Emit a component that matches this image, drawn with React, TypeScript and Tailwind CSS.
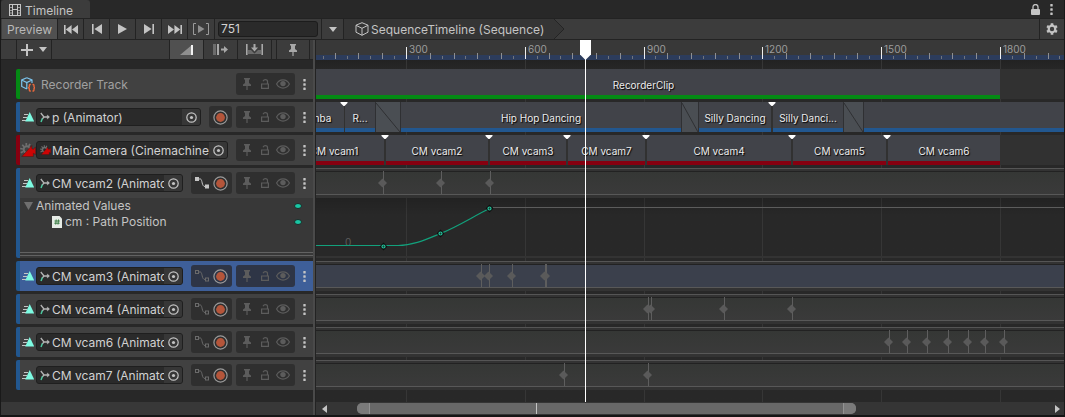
import React from "react";

type IconProps = { className?: string };

/* ---------- icons ---------- */

const FilmIcon = () => (
  <svg width="12" height="12" viewBox="0 0 12 12" fill="none" stroke="#c4c4c4" aria-hidden="true">
    <path d="M.5 0v12M11.5 0v12M3.5 0v12M8.5 0v12M0 .5h12M0 11.5h12M3 5.5h6" />
    <path d="M1 3.5h2M1 6.5h2M1 9h2M9 3.5h2M9 6.5h2M9 9h2" opacity=".7" />
  </svg>
);

const LockIcon = () => (
  <svg width="9" height="11" viewBox="0 0 9 11" aria-hidden="true">
    <path d="M2 5V3a2.5 2.5 0 0 1 5 0v2" fill="none" stroke="#c4c4c4" strokeWidth="1.3" />
    <rect x="0" y="5" width="9" height="6" rx="1" fill="#c4c4c4" />
  </svg>
);

const KebabIcon = () => (
  <svg width="3" height="11" viewBox="0 0 3 11" fill="#c4c4c4" aria-hidden="true">
    <rect x=".3" y="0" width="2.4" height="2.4" rx=".5" />
    <rect x=".3" y="4.3" width="2.4" height="2.4" rx=".5" />
    <rect x=".3" y="8.6" width="2.4" height="2.4" rx=".5" />
  </svg>
);

const SkipStartIcon = () => (
  <svg width="14" height="9" viewBox="0 0 14 9" fill="#c4c4c4" aria-hidden="true">
    <path d="M0 0h1.6v9H0zM7.6 0v9L1.8 4.5zM14 0v9L8 4.5z" />
  </svg>
);
const StepBackIcon = () => (
  <svg width="10" height="10" viewBox="0 0 10 10" fill="#c4c4c4" aria-hidden="true">
    <path d="M0 0h1.6v10H0zM10 0v10L2.4 5z" />
  </svg>
);
const PlayIcon = () => (
  <svg width="9" height="10" viewBox="0 0 9 10" fill="#c4c4c4" aria-hidden="true">
    <path d="M0 0v10l9-5z" />
  </svg>
);
const StepForwardIcon = () => (
  <svg width="10" height="10" viewBox="0 0 10 10" fill="#c4c4c4" aria-hidden="true">
    <path d="M8.4 0H10v10H8.4zM0 0v10l7.6-5z" />
  </svg>
);
const SkipEndIcon = () => (
  <svg width="14" height="9" viewBox="0 0 14 9" fill="#c4c4c4" aria-hidden="true">
    <path d="M12.4 0H14v9h-1.6zM6.4 0v9l5.8-4.5zM0 0v9l6-4.5z" />
  </svg>
);
const PlayRangeIcon = () => (
  <svg width="16" height="12" viewBox="0 0 16 12" aria-hidden="true">
    <path d="M3 .5H.5v11H3M13 .5h2.500v11H13" fill="none" stroke="#9b9b9b" />
    <path d="M5 2v8l6.500-4z" fill="#8f8f8f" />
  </svg>
);

const ChevronDown = () => (
  <svg width="8" height="5" viewBox="0 0 8 5" fill="#c4c4c4" aria-hidden="true">
    <path d="M0 0h8L4 5z" />
  </svg>
);

const CubeIcon = () => (
  <svg width="14" height="14" viewBox="0 0 14 14" fill="none" stroke="#c4c4c4" strokeLinejoin="round" aria-hidden="true">
    <path d="M7 .7l6 2.500v7L7 13.300 1 10.200v-7zM1 3.300l6 3 6-3M7 6.300v7" />
  </svg>
);

const GearIcon = () => (
  <svg width="12" height="12" viewBox="0 0 12 12" fill="none" stroke="#c4c4c4" aria-hidden="true">
    <circle cx="6" cy="6" r="3.300" strokeWidth="2.200" />
    <path d="M6 .3v2M6 9.700v2M1.060 3.150l1.700 1M9.240 7.850l1.700 1M1.060 8.850l1.700-1M9.240 4.150l1.700-1" strokeWidth="2.600" />
  </svg>
);

const PlusIcon = () => (
  <svg width="12" height="12" viewBox="0 0 12 12" fill="#c4c4c4" aria-hidden="true">
    <path d="M5 0h2v5h5v2H7v5H5V7H0V5h5z" />
  </svg>
);

const MixIcon = () => (
  <svg width="13" height="10" viewBox="0 0 13 10" aria-hidden="true">
    <path d="M0 10L11 .8V10z" fill="#8f8f8f" />
    <path d="M11 0h2v10h-2z" fill="#f2f2f2" />
  </svg>
);
const RippleIcon = () => (
  <svg width="15" height="11" viewBox="0 0 15 11" aria-hidden="true">
    <path d="M0 0h3v11H0z" fill="#6b6b6b" />
    <path d="M4 0h2v11H4z" fill="#a8a8a8" />
    <path d="M8 4.500h3V2l4 3.500L11 9V6.500H8z" fill="#a8a8a8" />
  </svg>
);
const ReplaceIcon = () => (
  <svg width="17" height="11" viewBox="0 0 17 11" aria-hidden="true">
    <path d="M2 6h3l3.500 3.500L12 6h3v4H2z" fill="#6b6b6b" />
    <path d="M0 0h1.600v11H0zM15.400 0H17v11h-1.600zM7.500 0h2v3.500H12L8.500 7.500 5 3.500h2.500z" fill="#a8a8a8" />
  </svg>
);

const PinIcon = ({ className }: IconProps) => (
  <svg width="8" height="12" viewBox="0 0 8 12" fill="currentColor" className={className} aria-hidden="true">
    <path d="M1 0h6v1.500H6V5l2 1.500V8H4.600v4H3.400V8H0V6.500L2 5V1.500H1z" />
  </svg>
);
const UnlockIcon = () => (
  <svg width="8" height="10" viewBox="0 0 8 10" fill="none" stroke="currentColor" aria-hidden="true">
    <path d="M.6 5h6.800v4.400H.6zM6.500 5V2.600C6.500 1.200 5.500.6 4.300.6S2.500 1.300 2 2.200" strokeWidth="1.200" />
  </svg>
);
const EyeIcon = () => (
  <svg width="14" height="10" viewBox="0 0 14 10" fill="none" stroke="currentColor" aria-hidden="true">
    <path d="M.6 5C3.600-.4 10.400-.4 13.400 5 10.400 10.400 3.600 10.400.6 5z" strokeWidth="1.200" />
    <circle cx="7" cy="4.600" r="2.700" fill="currentColor" stroke="none" />
  </svg>
);

const RecordIcon = () => (
  <svg width="15" height="15" viewBox="0 0 15 15" aria-hidden="true">
    <circle cx="7.500" cy="7.500" r="6.600" fill="none" stroke="#9a9a9a" strokeWidth="1.200" />
    <circle cx="7.500" cy="7.500" r="4.400" fill="#b4553a" />
  </svg>
);

const CurvesIcon = ({ active }: { active: boolean }) => (
  <svg width="14" height="12" viewBox="0 0 14 12" fill="none" stroke={active ? "#c4c4c4" : "#6a6a6a"} aria-hidden="true">
    <path d="M4 2h1.500C7.500 2.500 6.500 9.500 10 9.500" />
    <rect x=".5" y=".5" width="3" height="3" fill={active ? "#c4c4c4" : "none"} />
    <rect x="10.500" y="8" width="3" height="3" fill={active ? "#c4c4c4" : "none"} />
  </svg>
);

const PickerIcon = () => (
  <svg width="11" height="11" viewBox="0 0 11 11" aria-hidden="true">
    <circle cx="5.500" cy="5.500" r="4.700" fill="none" stroke="#c4c4c4" strokeWidth="1.200" />
    <circle cx="5.500" cy="5.500" r="1.600" fill="#c4c4c4" />
  </svg>
);

const AnimationTrackIcon = () => (
  <svg width="12" height="10" viewBox="0 0 12 10" aria-hidden="true">
    <path d="M2 2.500h4M1 5.500h4M0 8.500h4" stroke="#c4c4c4" />
    <path d="M7.700 0L12.200 9.500H3.200z" fill="#7dfbe2" />
  </svg>
);

const AnimatorIcon = () => (
  <svg width="10" height="11" viewBox="0 0 10 11" fill="none" aria-hidden="true">
    <path d="M.8 1L4 5H9" stroke="#b5b5b5" strokeWidth="1.300" />
    <path d="M7.300 3L9.500 5 7.300 7z" fill="#b5b5b5" stroke="#b5b5b5" strokeWidth=".5" />
    <path d="M4 5L2.200 7" stroke="#b5b5b5" strokeWidth="1.300" />
    <path d="M2.400 6.500L1 10" stroke="#4cc9a0" strokeWidth="1.500" />
  </svg>
);

const CinemachineIcon = ({ className }: IconProps) => (
  <svg viewBox="0 0 16 14" className={className} aria-hidden="true">
    <circle cx="6.800" cy="6.500" r="3.200" fill="none" stroke="#6e6e6e" strokeWidth="2" />
    <path d="M6.300 0v2.500M10 .8L8.800 3M2.300 1.800L4 3.800M.2 5.500l2.600.5M.8 9.800l2.200-1.200" stroke="#6e6e6e" strokeWidth="1.700" />
    <path d="M1.800 13.600L10.300 4.200l1.500-1.700v3l1.400.8L15.600 4v7.600l-2.200-1.300v3.300z" fill="#cc0505" stroke="#3a1010" strokeWidth=".4" />
  </svg>
);

const RecorderIcon = () => (
  <svg width="14" height="15" viewBox="0 0 14 15" fill="none" aria-hidden="true">
    <path d="M5.800.7L11 3v3M5.800.7L.7 3v6.500L5.800 12M.7 3l5.100 2.500L11 3M5.800 5.500V12" stroke="#7cc4ee" strokeWidth="1.200" />
    <path d="M9.800 7.500H9c-.6 0-.7.400-.7 1V10l-.8.800.8.800v1.400c0 .600.100 1 .700 1h.8M11.500 7.500h.8c.6 0 .7.400.7 1V10l.8.800-.8.800v1.400c0 .6-.1 1-.7 1h-.8" stroke="#ef6a3c" strokeWidth="1.300" />
  </svg>
);

const ScriptIcon = () => (
  <svg width="10" height="12" viewBox="0 0 10 12" aria-hidden="true">
    <path d="M0 0h7.500L10 2.500V12H0z" fill="#e6ebe6" />
    <path d="M4.200 3.500l-.5 5M6.500 3.500L6 8.500M2.500 5h5.300M2.300 7.200h5.300" stroke="#3b7d44" />
  </svg>
);

/* ---------- data ---------- */

type Clip = { x: number; w: number; label?: string; kind?: "blend"; cut?: boolean };
type Track = {
  id: string;
  name: string;
  kind: "recorder" | "animation" | "cinemachine";
  clips?: Clip[];
  keys?: number[];
  record?: boolean;
  curves?: "open" | "closed";
  selected?: boolean;
};

const TRACKS: Track[] = [
  {
    id: "recorder",
    name: "Recorder Track",
    kind: "recorder",
    clips: [{ x: -29, w: 713, label: "RecorderClip" }],
  },
  {
    id: "p",
    name: "p (Animator)",
    kind: "animation",
    record: true,
    clips: [
      { x: -30, w: 58, label: "Samba" },
      { x: 29, w: 30, label: "R...", cut: true },
      { x: 59, w: 26, kind: "blend" },
      { x: 85, w: 280, label: "Hip Hop Dancing" },
      { x: 365, w: 18, kind: "blend" },
      { x: 383, w: 72, label: "Silly Dancing" },
      { x: 457, w: 70, label: "Silly Danci...", cut: true },
      { x: 527, w: 21, kind: "blend" },
      { x: 548, w: 2000 },
    ],
  },
  {
    id: "camera",
    name: "Main Camera (CinemachineBrain)",
    kind: "cinemachine",
    clips: [
      { x: -32, w: 100, label: "CM vcam1" },
      { x: 70, w: 102, label: "CM vcam2", cut: true },
      { x: 174, w: 76, label: "CM vcam3", cut: true },
      { x: 252, w: 77, label: "CM vcam7", cut: true },
      { x: 331, w: 144, label: "CM vcam4", cut: true },
      { x: 477, w: 93, label: "CM vcam5", cut: true },
      { x: 572, w: 112, label: "CM vcam6", cut: true },
    ],
  },
  { id: "v2", name: "CM vcam2 (Animator)", kind: "animation", record: true, curves: "open", keys: [67, 125, 174] },
  { id: "v3", name: "CM vcam3 (Animator)", kind: "animation", record: true, curves: "closed", selected: true, keys: [165, 173, 196, 229, 230] },
  { id: "v4", name: "CM vcam4 (Animator)", kind: "animation", record: true, curves: "closed", keys: [332, 335, 408, 476] },
  { id: "v6", name: "CM vcam6 (Animator)", kind: "animation", record: true, curves: "closed", keys: [573, 591, 611, 632, 652, 669, 688] },
  { id: "v7", name: "CM vcam7 (Animator)", kind: "animation", record: true, curves: "closed", keys: [248, 332] },
];

const STRIP = { recorder: "bg-[#048a14]", animation: "bg-[#22578f]", cinemachine: "bg-[#860010]" };

const PX_PER_FRAME = 0.396;
const frameToX = (frame: number) => Math.round(90 + (frame - 300) * PX_PER_FRAME);
const MAJOR_FRAMES = [300, 600, 900, 1200, 1500, 1800, 2100, 2400, 2700, 3000];
const TICK_FRAMES = Array.from({ length: 100 }, (_, i) => 90 + i * 30);
const PLAYHEAD_FRAME = 751;

/* ---------- header side ---------- */

function ToolButton({ label, children, className = "" }: { label: string; children: React.ReactNode; className?: string }) {
  return (
    <button aria-label={label} className={`flex shrink-0 items-center justify-center border-r border-[#232323] ${className}`}>
      {children}
    </button>
  );
}

function ObjectField({ track }: { track: Track }) {
  return (
    <div className="mr-2 flex h-[18px] min-w-0 flex-1 overflow-hidden rounded-[3px] border border-[#1f1f1f] bg-[#2a2a2a]">
      <div className="flex min-w-0 flex-1 items-center gap-0.5 overflow-hidden pl-[3px]">
        <span className="flex w-[10px] shrink-0 justify-center">
          {track.kind === "cinemachine" ? <CinemachineIcon className="h-[10px] w-[11px] shrink-0" /> : <AnimatorIcon />}
        </span>
        <span className="whitespace-nowrap pt-0.5 text-[#d2d2d2]">{track.name}</span>
      </div>
      <button aria-label={`Select object for ${track.name}`} className="flex w-[18px] shrink-0 items-center justify-center bg-[#373737]">
        <PickerIcon />
      </button>
    </div>
  );
}

function TrackHeader({ track }: { track: Track }) {
  const group = track.selected ? "bg-[#2e3546]" : "bg-[#2f2f2f]";
  return (
    <section className="flex">
      <div className={`w-1 shrink-0 rounded-l-[2px] ${STRIP[track.kind]}`} />
      <div className="min-w-0 flex-1">
        <div className={`flex h-[30px] items-center ${track.selected ? "bg-[#3e5f99]" : "bg-[#414141]"}`}>
          <span className="flex w-4 shrink-0 items-center justify-center">
            {track.kind === "recorder" && <RecorderIcon />}
            {track.kind === "animation" && <AnimationTrackIcon />}
            {track.kind === "cinemachine" && <CinemachineIcon className="h-[14px] w-4" />}
          </span>
          {track.kind === "recorder" ? (
            <span className="flex-1 pl-[5px] pt-0.5 text-[#a0a0a0]">{track.name}</span>
          ) : (
            <ObjectField track={track} />
          )}
          {track.record && (
            <div className={`mr-1 flex h-[22px] items-center gap-1 rounded-[3px] pl-1 pr-1 ${group}`}>
              {track.curves && (
                <button aria-label="Toggle curves">
                  <CurvesIcon active={track.curves === "open"} />
                </button>
              )}
              <button aria-label="Record">
                <RecordIcon />
              </button>
            </div>
          )}
          <div className={`flex h-[22px] w-[59px] items-center justify-between rounded-[3px] pl-[7px] pr-[5px] text-[#5c5c5c] ${group}`}>
            <button aria-label="Show markers"><PinIcon /></button>
            <button aria-label="Lock track" className="pl-0.5"><UnlockIcon /></button>
            <button aria-label="Mute track"><EyeIcon /></button>
          </div>
          <button aria-label="Track options" className="flex w-[18px] items-center justify-center">
            <KebabIcon />
          </button>
        </div>
        {track.curves === "open" && <AnimatedValues />}
      </div>
    </section>
  );
}

function AnimatedValues() {
  const dot = (
    <svg width="8" height="6" viewBox="0 0 8 6" aria-hidden="true">
      <ellipse cx="4" cy="3" rx="3.500" ry="2.500" fill="#19c6a4" stroke="#1d2b28" />
    </svg>
  );
  return (
    <div className="flex h-[60px] flex-col bg-[#383838] text-[#c4c4c4]">
      <div className="flex h-4 items-center pl-1 pr-[11px]">
        <svg width="9" height="8" viewBox="0 0 9 8" fill="#6f6f6f" aria-hidden="true">
          <path d="M0 0h9L4.500 8z" />
        </svg>
        <span className="flex-1 pl-[3px]">Animated Values</span>
        {dot}
      </div>
      <div className="flex h-4 items-center pl-8 pr-[11px]">
        <ScriptIcon />
        <span className="flex-1 pl-[3px]">cm : Path Position</span>
        {dot}
      </div>
      <div className="mb-0.5 mt-auto h-1 border-y border-[#626262]" />
    </div>
  );
}

/* ---------- canvas side ---------- */

function ClipLane({ track }: { track: Track }) {
  return (
    <div className="relative h-[30px] overflow-hidden bg-[#313131]">
      {track.clips!.map((clip, i) => (
        <div key={i} className="absolute inset-y-0" style={{ left: clip.x, width: clip.w }}>
          {clip.kind === "blend" ? (
            <svg className="size-full border-x border-[#2f3033] bg-[#4a4e53]" viewBox="0 0 20 30" preserveAspectRatio="none" aria-hidden="true">
              <path d="M0 1L20 30" stroke="#2f3033" vectorEffect="non-scaling-stroke" />
            </svg>
          ) : (
            <div className="flex h-full flex-col bg-[#414349]">
              <span className="flex flex-1 items-center justify-center whitespace-nowrap pt-1.5 text-[10px] leading-none text-[#ececec] [text-shadow:1px_1px_1px_#000]">
                {clip.label}
              </span>
              <div className={`h-1 ${STRIP[track.kind]}`} />
            </div>
          )}
          {clip.cut && (
            <svg width="8" height="4" viewBox="0 0 8 4" fill="#fff" className="absolute -left-[5px] top-0" aria-hidden="true">
              <path d="M.5 0h7v1L4.500 4h-1L.5 1z" />
            </svg>
          )}
        </div>
      ))}
    </div>
  );
}

function KeyLane({ track }: { track: Track }) {
  return (
    <div className="h-[30px] border-t border-[#555] bg-[#333] pb-1 pt-0.5">
      <div
        className={`relative h-6 border-b border-t border-b-[#585858] border-t-[#222] ${
          track.selected ? "bg-[#3b404c]" : "bg-linear-to-b from-[#353735] to-[#3a3a3a]"
        }`}
      >
        {track.keys!.map((x) => (
          <svg key={x} width="9" height="23" viewBox="0 0 9 23" className="absolute -top-px" style={{ left: x - 5 }} aria-hidden="true">
            <path d="M5 0h1v23H5z" fill="#5e5e5e" />
            <path d="M4.500 7.500L9 12 4.500 16.500 0 12z" fill="#5a5a5a" />
          </svg>
        ))}
      </div>
    </div>
  );
}

const CURVE_KEYS: [number, number][] = [
  [67, 48],
  [124, 35],
  [173, 10],
];

function CurveLane() {
  return (
    <div className="h-[60px] overflow-hidden border-b-2 border-[#333] bg-linear-to-b from-black/15 to-transparent to-30%">
      <svg width="2400" height="58" viewBox="0 0 2400 58" fill="none" aria-label="Path Position curve">
        <path d="M0 47.500H40M177 9.500H2400" stroke="#5c5c5c" />
        <text x="29" y="48" fontSize="10" fill="#5c5c5c" fontFamily="Inter, sans-serif">0</text>
        <path d="M0 47.500H82C98 47.500 112 40.500 124.500 35.500C142 28.500 158 18 173.500 10.500" stroke="#12a17c" strokeWidth="1.200" />
        {CURVE_KEYS.map(([x, y]) => (
          <path key={x} d={`M${x + 0.5} ${y - 2}l2.500 2.500-2.500 2.500-2.500-2.500z`} fill="#1a3a33" stroke="#0d0d0d" strokeWidth="2" />
        ))}
        {CURVE_KEYS.map(([x, y]) => (
          <circle key={x} cx={x + 0.5} cy={y + 0.5} r="1.500" stroke="#25c79f" strokeWidth="1.200" />
        ))}
      </svg>
    </div>
  );
}

function Ruler() {
  return (
    <div className="relative h-5 overflow-hidden bg-[#383838]">
      <div className="mt-[15px] h-[5px] bg-[#2c3c5c]" />
      {TICK_FRAMES.map((f) => {
        const size = f % 300 === 0 ? "h-3 bg-[#eee]" : f % 60 === 0 ? "h-1.5 bg-[#8d8f94]" : "h-[3px] bg-[#70747d]";
        return <div key={f} className={`absolute bottom-px w-px ${size}`} style={{ left: frameToX(f) }} />;
      })}
      {MAJOR_FRAMES.map((f) => (
        <span key={f} className="absolute top-[3px] text-[10px] leading-[12px] text-[#9c9c9c]" style={{ left: frameToX(f) + 3 }}>
          {f}
        </span>
      ))}
    </div>
  );
}

function ScrollBar() {
  return (
    <div className="flex h-[13px] items-center bg-[#353535] pl-1.5 pr-1">
      <button aria-label="Scroll left">
        <svg width="5" height="8" viewBox="0 0 5 8" fill="#c4c4c4" aria-hidden="true"><path d="M5 0v8L0 4z" /></svg>
      </button>
      <div className="flex h-full flex-1 items-center pl-[4%] pr-[27%]">
        <div className="relative flex h-[11px] flex-1 justify-between overflow-hidden rounded-[5px] bg-[#686868]">
          <div className="w-[13px] border-r border-[#929292] bg-[#7a7a7a]" />
          <div className="w-[13px] border-l border-[#929292] bg-[#7a7a7a]" />
          <div className="absolute inset-y-0 left-[36%] w-px bg-[#c4c4c4]" />
        </div>
      </div>
      <button aria-label="Scroll right">
        <svg width="5" height="8" viewBox="0 0 5 8" fill="#c4c4c4" aria-hidden="true"><path d="M0 0v8l5-4z" /></svg>
      </button>
    </div>
  );
}

/* ---------- page ---------- */

export default function App() {
  return (
    <div className="flex min-h-screen flex-col border-x border-b-2 border-x-[#191919] border-b-[#151515] bg-[#282828] font-['Inter','Liberation_Sans',sans-serif] text-[12px] leading-4 text-[#c4c4c4]">
      <header className="flex h-[19px] items-center border-b border-[#232323]">
        <div className="flex h-full w-[89px] items-center gap-1 rounded-t-[3px] bg-[#3c3c3c] pl-2 pt-px">
          <FilmIcon />
          <span className="pt-0.5">Timeline</span>
        </div>
        <div className="ml-auto flex items-center gap-[10px] pr-[11px]">
          <button aria-label="Lock window"><LockIcon /></button>
          <button aria-label="Window options"><KebabIcon /></button>
        </div>
      </header>

      <div className="flex h-[21px] border-b border-[#232323] bg-[#3c3c3c]" role="toolbar">
        <button className="ml-px w-14 shrink-0 border-r border-[#232323] bg-[#505050] pt-0.5 text-[#b9b9b9]">Preview</button>
        <ToolButton label="Go to start" className="w-[26px]"><SkipStartIcon /></ToolButton>
        <ToolButton label="Previous frame" className="w-[26px]"><StepBackIcon /></ToolButton>
        <ToolButton label="Play" className="w-[26px]"><PlayIcon /></ToolButton>
        <ToolButton label="Next frame" className="w-[26px]"><StepForwardIcon /></ToolButton>
        <ToolButton label="Go to end" className="w-[26px]"><SkipEndIcon /></ToolButton>
        <ToolButton label="Play range" className="w-[27px]"><PlayRangeIcon /></ToolButton>
        <div className="flex items-center border-r border-[#232323] px-[3px]">
          <input
            aria-label="Current frame"
            defaultValue="751"
            className="h-4 w-[100px] rounded-[3px] border border-[#1c1c1c] bg-[#2a2a2a] px-0.5 text-[#d2d2d2] outline-none"
          />
        </div>
        <ToolButton label="Select sequence" className="w-[22px]"><ChevronDown /></ToolButton>
        <nav className="flex min-w-0" aria-label="Sequence">
          <a href="#sequence" className="flex items-center gap-0.5 whitespace-nowrap bg-[#353535] pl-[11px] pr-2.5">
            <CubeIcon />
            <span className="pt-0.5">SequenceTimeline (Sequence)</span>
          </a>
          <svg width="11" height="20" viewBox="0 0 11 20" aria-hidden="true">
            <path d="M0 0L10 10 0 20z" fill="#353535" />
            <path d="M0 0L10 10 0 20" fill="none" stroke="#242424" />
          </svg>
        </nav>
        <button aria-label="Settings" className="ml-auto flex w-[25px] items-center justify-center border-l border-[#232323]">
          <GearIcon />
        </button>
      </div>

      <main className="flex flex-1">
        <aside className="flex w-[312px] shrink-0 flex-col">
          <div className="flex h-5 border-b border-[#232323] bg-[#3c3c3c]" role="toolbar">
            <div className="w-4 border-r border-[#232323]" />
            <ToolButton label="Add track" className="w-[35px] gap-1.5"><PlusIcon /><ChevronDown /></ToolButton>
            <div className="flex-1 border-r border-[#232323]" />
            <ToolButton label="Mix mode" className="w-[34px] bg-[#505050]"><MixIcon /></ToolButton>
            <ToolButton label="Ripple mode" className="w-[34px]"><RippleIcon /></ToolButton>
            <ToolButton label="Replace mode" className="w-[34px]"><ReplaceIcon /></ToolButton>
            <div className="w-[5px] border-r border-[#232323]" />
            <ToolButton label="Show markers" className="w-[33px]"><PinIcon className="text-[#a8a8a8]" /></ToolButton>
            <div className="w-[3px]" />
          </div>
          <div className="flex flex-1 flex-col gap-[3px] pb-3 pl-[15px] pt-[9px]">
            {TRACKS.map((t) => (
              <TrackHeader key={t.id} track={t} />
            ))}
          </div>
          <div className="h-[13px] bg-[#383838]" />
        </aside>

        <div className="w-[3px] shrink-0 border-r border-[#232323] bg-[#4a4a4a]" />

        <div className="flex min-w-0 flex-1 flex-col">
          <div className="relative flex flex-1 flex-col overflow-hidden">
            <Ruler />
            <div className="relative flex flex-1 flex-col bg-linear-to-b from-[#222] to-[#282828] to-[12px]">
              {MAJOR_FRAMES.map((f) => (
                <div key={f} className="absolute inset-y-0 w-px bg-[#363636]" style={{ left: frameToX(f) }} />
              ))}
              <div className="relative flex flex-1 flex-col gap-[3px] pb-3 pt-[9px]">
                {TRACKS.map((t) => (
                  <div key={t.id}>
                    {t.clips ? <ClipLane track={t} /> : <KeyLane track={t} />}
                    {t.curves === "open" && <CurveLane />}
                  </div>
                ))}
              </div>
            </div>
            <div className="absolute inset-y-0 w-px bg-white" style={{ left: frameToX(PLAYHEAD_FRAME) }}>
              <svg width="11" height="20" viewBox="0 0 11 20" fill="#fff" className="absolute -left-[5px] top-0" aria-hidden="true">
                <path d="M0 0h11v14.500L5.500 20 0 14.500z" />
              </svg>
            </div>
          </div>
          <ScrollBar />
        </div>
      </main>
    </div>
  );
}
